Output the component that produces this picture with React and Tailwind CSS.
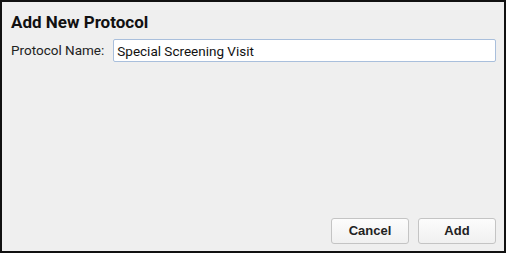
import React, { useState } from "react";

export default function App() {
  const [name, setName] = useState("Special Screening Visit");

  return (
    <div className="w-[507px] h-[254px] bg-white font-['Roboto',sans-serif]">
      <div className="flex flex-col w-[506px] h-[253px] border-2 border-[#111] bg-[#efefef] pl-[9px] pr-[8px] pt-[10px] pb-[7px]">
        <div className="text-[17px] leading-[20px] font-bold text-[#111]">Add New Protocol</div>
        <div className="flex items-center mt-[7px]">
          <span className="text-[13.5px] text-[#222] mr-[9px]">Protocol Name:</span>
          <input
            value={name}
            onChange={(e) => setName(e.target.value)}
            className="flex-1 h-[23px] bg-white border border-[#a9bfdc] rounded-[2px] px-[3px] text-[13.5px] text-[#111] outline-none font-['Roboto',sans-serif]"
          />
        </div>
        <div className="flex-1" />
        <div className="flex justify-end gap-[9px]">
          <Button>Cancel</Button>
          <Button>Add</Button>
        </div>
      </div>
    </div>
  );
}

function Button({ children }) {
  return (
    <button className="w-[78px] h-[26px] rounded-[3px] border border-[#c4c4c4] bg-gradient-to-b from-[#fcfcfc] to-[#f0f0f0] text-[13px] font-bold text-[#222] font-['Liberation_Sans',sans-serif]">
      {children}
    </button>
  );
}
